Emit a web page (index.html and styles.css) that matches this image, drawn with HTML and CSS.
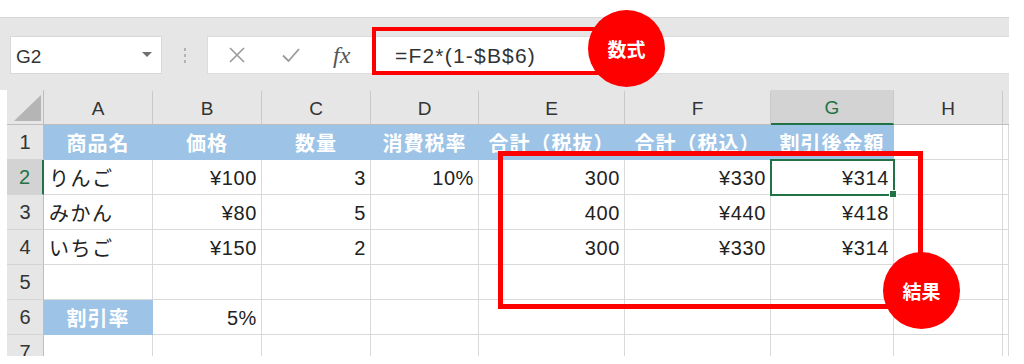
FILE: index.html
```html
<!DOCTYPE html>
<html lang="ja">
<head>
<meta charset="utf-8">
<link rel="stylesheet" href="styles.css">
</head>
<body>
<div class="page">
  <div class="toolbar">
    <div class="namebox"><span class="ref">G2</span><span class="caret"></span></div>
    <div class="grip"><i></i><i></i><i></i></div>
    <div class="fbar">
      <svg class="ico" width="18" height="18" viewBox="0 0 18 18"><path d="M2 2L16 16M16 2L2 16" stroke="#9a9a9a" stroke-width="1.6" fill="none"/></svg>
      <svg class="ico chk" width="20" height="18" viewBox="0 0 20 18"><path d="M2 9.5L7.5 15L18 3" stroke="#9a9a9a" stroke-width="1.8" fill="none"/></svg>
      <span class="fx">fx</span>
      <span class="formula">=F2*(1-$B$6)</span>
    </div>
  </div>

  <div class="sheet">
    <div class="hd corner"><span class="tri"></span></div>
    <div class="hd col">A</div>
    <div class="hd col">B</div>
    <div class="hd col">C</div>
    <div class="hd col">D</div>
    <div class="hd col">E</div>
    <div class="hd col">F</div>
    <div class="hd col sel">G</div>
    <div class="hd col">H</div>
    <div class="hd col edge"></div>

    <div class="hd row">1</div>
    <div class="c blue">商品名</div>
    <div class="c blue">価格</div>
    <div class="c blue">数量</div>
    <div class="c blue">消費税率</div>
    <div class="c blue">合計（税抜）</div>
    <div class="c blue">合計（税込）</div>
    <div class="c blue">割引後金額</div>
    <div class="c"></div>
    <div class="c"></div>

    <div class="hd row rsel">2</div>
    <div class="c l">りんご</div>
    <div class="c r">¥100</div>
    <div class="c r">3</div>
    <div class="c r">10%</div>
    <div class="c r">300</div>
    <div class="c r">¥330</div>
    <div class="c r active">¥314<span class="handle"></span></div>
    <div class="c"></div>
    <div class="c"></div>

    <div class="hd row">3</div>
    <div class="c l">みかん</div>
    <div class="c r">¥80</div>
    <div class="c r">5</div>
    <div class="c"></div>
    <div class="c r">400</div>
    <div class="c r">¥440</div>
    <div class="c r">¥418</div>
    <div class="c"></div>
    <div class="c"></div>

    <div class="hd row">4</div>
    <div class="c l">いちご</div>
    <div class="c r">¥150</div>
    <div class="c r">2</div>
    <div class="c"></div>
    <div class="c r">300</div>
    <div class="c r">¥330</div>
    <div class="c r">¥314</div>
    <div class="c"></div>
    <div class="c"></div>

    <div class="hd row">5</div>
    <div class="c"></div><div class="c"></div><div class="c"></div><div class="c"></div><div class="c"></div><div class="c"></div><div class="c"></div><div class="c"></div><div class="c"></div>

    <div class="hd row">6</div>
    <div class="c blue">割引率</div>
    <div class="c r">5%</div>
    <div class="c"></div><div class="c"></div><div class="c"></div><div class="c"></div><div class="c"></div><div class="c"></div><div class="c"></div>

    <div class="hd row">7</div>
    <div class="c"></div><div class="c"></div><div class="c"></div><div class="c"></div><div class="c"></div><div class="c"></div><div class="c"></div><div class="c"></div><div class="c"></div>
  </div>

  <div class="mark box-formula"></div>
  <div class="bubble bubble-formula">数式</div>
  <div class="mark box-result"></div>
  <div class="bubble bubble-result">結果</div>
</div>
</body>
</html>
```

FILE: styles.css
```css
html, body {
  margin: 0;
  padding: 0;
  background: #ffffff;
}
body {
  font-family: "Liberation Sans", "Noto Sans CJK JP", sans-serif;
  color: #222222;
}
.page {
  position: relative;
  width: 1024px;
  height: 364px;
  overflow: hidden;
  padding-top: 17px;
  box-sizing: border-box;
}
.toolbar {
  width: 1009px;
  height: 73px;
  background: #e6e6e6;
  border-top: 1px solid #d6d6d6;
  box-sizing: border-box;
  display: flex;
  align-items: flex-start;
  padding-top: 18px;
}
.namebox {
  margin-left: 10px;
  width: 152px;
  height: 38px;
  background: #ffffff;
  border: 1px solid #d8d8d8;
  box-sizing: border-box;
  display: flex;
  align-items: center;
  justify-content: space-between;
  padding: 0 9px 0 5px;
}
.ref {
  font-size: 19px;
  color: #333333;
  padding-top: 3px;
}
.caret {
  width: 0;
  height: 0;
  border-left: 5px solid transparent;
  border-right: 5px solid transparent;
  border-top: 5px solid #707070;
  margin-top: -2px;
}
.grip {
  width: 45px;
  height: 38px;
  display: flex;
  flex-direction: column;
  align-items: center;
  justify-content: center;
  gap: 3px;
}
.grip i {
  display: block;
  width: 2px;
  height: 3px;
  background: #b3b3b3;
}
.fbar {
  flex: 1;
  height: 38px;
  background: #ffffff;
  border: 1px solid #dcdcdc;
  border-right: none;
  box-sizing: border-box;
  display: flex;
  align-items: center;
  padding-left: 20px;
}
.ico {
  display: block;
  flex: none;
}
.chk {
  margin-left: 35px;
}
.fx {
  margin-left: 32px;
  font-family: "Liberation Serif", serif;
  font-style: italic;
  font-size: 24px;
  color: #555555;
  width: 24px;
}
.formula {
  margin-left: 38px;
  font-size: 21px;
  letter-spacing: 1.2px;
  color: #333333;
  padding-top: 2px;
}

.sheet {
  margin-left: 7px;
  width: 1002px;
  height: 266px;
  overflow: hidden;
  display: grid;
  grid-template-columns: 37px 109px 109px 109px 108px 146px 146px 123px 109px 6px;
  grid-template-rows: 35px repeat(6, 35px) 35px;
  background: #e6e6e6;
}
.hd {
  background: #e6e6e6;
  font-size: 19px;
  color: #333333;
  display: flex;
  align-items: center;
  justify-content: center;
  box-sizing: border-box;
}
.hd.col {
  border-right: 1px solid #c9c9c9;
  border-bottom: 1px solid #bdbdbd;
  border-top: 2px solid #e6e6e6;
  padding-top: 1px;
}
.hd.col.edge {
  border-right: none;
}
.hd.col.sel {
  background: #d3d3d3;
  color: #217346;
  border-bottom: 2px solid #217346;
  border-top-color: #d3d3d3;
}
.corner {
  border-right: 1px solid #bdbdbd;
  border-bottom: 1px solid #bdbdbd;
  position: relative;
}
.tri {
  position: absolute;
  right: 2px;
  bottom: 3px;
  width: 0;
  height: 0;
  border-left: 27px solid transparent;
  border-bottom: 26px solid #b5b5b5;
}
.hd.row {
  border-right: 1px solid #bdbdbd;
  border-bottom: 1px solid #d4d4d4;
  font-size: 20px;
}
.hd.row.rsel {
  background: #d3d3d3;
  color: #217346;
  border-right: 2px solid #217346;
}
.c {
  background: #ffffff;
  border-right: 1px solid #d9d9d9;
  border-bottom: 1px solid #d9d9d9;
  box-sizing: border-box;
  font-size: 20px;
  display: flex;
  align-items: center;
  white-space: nowrap;
  position: relative;
}
.c.l {
  padding-left: 5px;
  font-family: "Noto Sans CJK JP", sans-serif;
  letter-spacing: 1.5px;
}
.c.r {
  justify-content: flex-end;
  padding-right: 4px;
  padding-top: 2px;
  letter-spacing: 0.6px;
}
.c.blue {
  background: #9dc3e6;
  border-color: #9dc3e6;
  color: #ffffff;
  font-weight: bold;
  justify-content: center;
  font-family: "Noto Sans CJK JP", sans-serif;
  font-size: 20px;
  letter-spacing: 1px;
}
.c.active {
  outline: 2px solid #217346;
  outline-offset: -1px;
  z-index: 2;
}
.handle {
  position: absolute;
  right: -4px;
  bottom: -4px;
  width: 6px;
  height: 6px;
  background: #217346;
  border: 1px solid #ffffff;
}

.mark {
  position: absolute;
  border: 4px solid #ff0000;
  box-sizing: border-box;
  z-index: 5;
}
.box-formula {
  left: 372px;
  top: 27px;
  width: 240px;
  height: 48px;
}
.box-result {
  left: 498px;
  top: 151px;
  width: 425px;
  height: 158px;
  border-width: 5px;
}
.bubble {
  position: absolute;
  width: 77px;
  height: 77px;
  border-radius: 50%;
  background: #ff0000;
  color: #ffffff;
  font-family: "Noto Sans CJK JP", sans-serif;
  font-weight: bold;
  font-size: 19px;
  display: flex;
  align-items: center;
  justify-content: center;
  z-index: 6;
}
.bubble-formula {
  left: 588px;
  top: 10px;
}
.bubble-result {
  left: 883px;
  top: 252px;
}
```
